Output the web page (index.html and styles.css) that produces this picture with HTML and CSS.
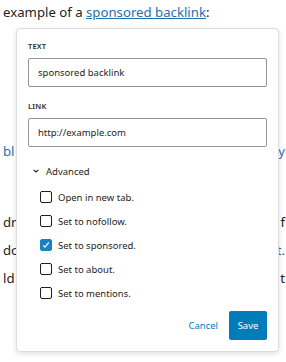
FILE: index.html
```html
<!DOCTYPE html>
<html lang="en">
<head>
  <meta charset="UTF-8" />
  <title>Link settings</title>
  <link rel="stylesheet" href="styles.css">
</head>
<body>

  <div class="post">
    <p class="lead">example of a <a href="#">sponsored backlink</a>:</p>
    <div class="line l1"><a href="#">bl</a><a href="#">y</a></div>
    <div class="line l2"><span>dr</span><span>f</span></div>
    <div class="line l3"><span>do</span><a href="#">t.</a></div>
    <div class="line l4"><span>ld <em class="mark">f</em></span><span>t</span></div>
  </div>

  <form class="popover" id="linkForm">
    <label class="field-label" for="linkText">Text</label>
    <input class="field" type="text" id="linkText" value="sponsored backlink">

    <label class="field-label" for="linkUrl">Link</label>
    <input class="field" type="text" id="linkUrl" value="http://example.com">

    <div class="advanced">
      <svg class="chevron" width="6" height="4" viewBox="0 0 6 4">
        <path d="M0.6 0.8 L3 3 L5.4 0.8" fill="none" stroke="#1e1e1e" stroke-width="1.1"/>
      </svg>
      <span>Advanced</span>
    </div>

    <div class="options">
      <label class="option"><span class="box"></span>Open in new tab.</label>
      <label class="option"><span class="box"></span>Set to nofollow.</label>
      <label class="option"><span class="box checked">
        <svg width="12" height="12" viewBox="0 0 12 12"><path d="M3.2 6.4 L5 8.2 L8.8 3.4" fill="none" stroke="#fff" stroke-width="1.2"/></svg>
      </span>Set to sponsored.</label>
      <label class="option"><span class="box"></span>Set to about.</label>
      <label class="option"><span class="box"></span>Set to mentions.</label>
    </div>

    <div class="actions">
      <button type="button" class="btn-link">Cancel</button>
      <button type="submit" class="btn-primary">Save</button>
    </div>
  </form>

</body>
</html>
```

FILE: styles.css
```css
body {
  margin: 0;
  background: #fff;
  font-family: 'Noto Sans', 'Open Sans', sans-serif;
  color: #1e1e1e;
}

.post {
  padding: 2px 1px 0 3px;
  font-size: 13.2px;
}

.post a {
  color: #2271b1;
}

.lead {
  margin: 0;
  line-height: 20px;
}

.line {
  display: flex;
  justify-content: space-between;
  height: 20px;
  line-height: 20px;
}

.line a {
  text-decoration: none;
}

.l1 { margin-top: 119px; }
.l2 { margin-top: 51px; }
.l3 { margin-top: 8px; }
.l4 { margin-top: 8px; }

.mark {
  font-style: normal;
  color: #d63638;
}

.popover {
  position: absolute;
  left: 16px;
  top: 28px;
  width: 263px;
  box-sizing: border-box;
  margin: 0;
  padding: 11px;
  background: #fff;
  border: 1px solid #dcdcde;
  border-radius: 4px;
  box-shadow: 0 2px 5px rgba(0,0,0,0.12);
}

.field-label {
  display: block;
  height: 12px;
  line-height: 12px;
  margin-bottom: 6px;
  font-size: 7.5px;
  font-weight: 600;
  text-transform: uppercase;
  letter-spacing: 0.2px;
  color: #2c2c2c;
}

.field {
  display: block;
  width: 100%;
  height: 29px;
  box-sizing: border-box;
  margin: 0 0 13px;
  padding: 0 9px;
  border: 1px solid #949494;
  border-radius: 2px;
  font-family: 'Noto Sans', 'Open Sans', sans-serif;
  font-size: 9.5px;
  color: #1e1e1e;
  background: #fff;
}

#linkUrl {
  margin-bottom: 0;
}

.advanced {
  display: flex;
  align-items: center;
  gap: 7px;
  height: 14px;
  margin-top: 17px;
  padding-left: 5px;
  font-size: 9.5px;
}

.options {
  margin-top: 7px;
  padding-left: 12px;
}

.option {
  display: flex;
  align-items: center;
  height: 24px;
  font-size: 9.5px;
}

.box {
  width: 12px;
  height: 12px;
  box-sizing: border-box;
  margin-right: 6px;
  border: 1px solid #1e1e1e;
  border-radius: 2px;
  background: #fff;
}

.box.checked {
  border-color: #1a82c4;
  background: #1a82c4;
}

.box svg {
  display: block;
  margin: -1px;
}

.actions {
  display: flex;
  justify-content: flex-end;
  align-items: center;
  gap: 11px;
  margin-top: 6px;
}

.btn-link {
  padding: 0;
  border: none;
  background: none;
  font-family: 'Noto Sans', 'Open Sans', sans-serif;
  font-size: 9.5px;
  color: #007cba;
  cursor: pointer;
}

.btn-primary {
  width: 38px;
  height: 29px;
  padding: 0;
  border: none;
  border-radius: 2px;
  background: #007cba;
  font-family: 'Noto Sans', 'Open Sans', sans-serif;
  font-size: 9.5px;
  color: #fff;
  cursor: pointer;
}
```
